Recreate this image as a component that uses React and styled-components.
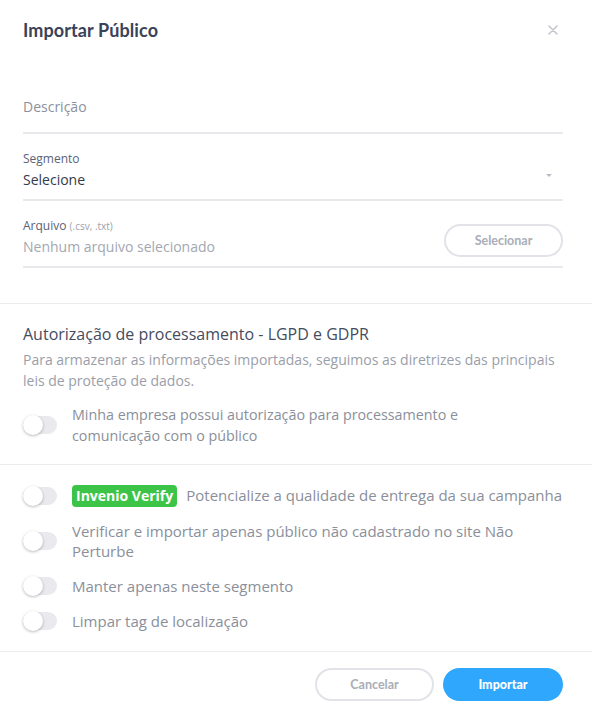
import React, { useState } from 'react'
import styled, { createGlobalStyle } from 'styled-components'

const GlobalStyle = createGlobalStyle`
  * { box-sizing: border-box; }
  body {
    margin: 0;
    background: #ffffff;
    font-family: "Open Sans", "Liberation Sans", sans-serif;
  }
`

const Modal = styled.div`
  width: 592px;
  height: 712px;
  background: #fff;
  display: flex;
  flex-direction: column;
`

const Header = styled.div`
  height: 60px;
  padding: 0 29px 0 23px;
  display: flex;
  align-items: center;
  justify-content: space-between;
`

const Title = styled.h2`
  margin: 0;
  font-family: Lato, "Open Sans", sans-serif;
  font-weight: 700;
  font-size: 18px;
  letter-spacing: 0.1px;
  color: #3a4258;
`

const Close = styled.button`
  border: none;
  background: none;
  padding: 0;
  width: 20px;
  height: 20px;
  display: flex;
  align-items: center;
  justify-content: center;
  cursor: pointer;
`

const Form = styled.div`
  padding: 37px 29px 35px 23px;
  border-bottom: 1px solid #ebecef;
  display: flex;
  flex-direction: column;
  gap: 16px;
`

const Field = styled.div`
  display: flex;
  align-items: flex-end;
  justify-content: space-between;
  border-bottom: 2px solid #e8e9ed;
  padding-bottom: ${p => p.$pb || 9}px;
`

const FieldBody = styled.div`
  display: flex;
  flex-direction: column;
  gap: ${p => p.$gap || 0}px;
`

const Label = styled.div`
  font-size: 12px;
  line-height: 18px;
  color: #5b6272;
  span {
    font-size: 10px;
    color: #9da1ab;
  }
`

const Value = styled.div`
  font-size: 14px;
  line-height: 20px;
  color: ${p => (p.$muted ? '#a3a7b1' : p.$placeholder ? '#8c909b' : '#333a4a')};
`

const Caret = styled.div`
  width: 0;
  height: 0;
  border-left: 3px solid transparent;
  border-right: 3px solid transparent;
  border-top: 3px solid #b9bcc4;
  margin: 0 11px 13px 0;
`

const GhostButton = styled.button`
  width: 119px;
  height: 33px;
  border: 2px solid #e2e3e8;
  border-radius: 17px;
  background: #fff;
  color: #a9adb7;
  font-family: Lato, "Open Sans", sans-serif;
  font-weight: 700;
  font-size: 12.5px;
  cursor: pointer;
`

const PrimaryButton = styled.button`
  width: 120px;
  height: 33px;
  border: none;
  border-radius: 17px;
  background: #2ea7fd;
  color: #fff;
  font-family: Lato, "Open Sans", sans-serif;
  font-weight: 900;
  font-size: 12.5px;
  cursor: pointer;
`

const Section = styled.div`
  padding: ${p => p.$pad};
  border-bottom: 1px solid #ebecef;
  display: flex;
  flex-direction: column;
  gap: ${p => p.$gap || 0}px;
`

const Heading = styled.h3`
  margin: 0;
  font-size: 16px;
  font-weight: 400;
  line-height: 22px;
  color: #454c5e;
`

const Para = styled.p`
  margin: 4px 0 0;
  font-size: 14px;
  line-height: 21px;
  color: #9a9ea9;
`

const ToggleRow = styled.label`
  display: flex;
  align-items: center;
  gap: 15px;
  cursor: pointer;
`

const Track = styled.span`
  flex: none;
  position: relative;
  width: 34px;
  height: 18px;
  border-radius: 9px;
  background: ${p => (p.$on ? '#2ea7fd' : '#e9e9ee')};
`

const Thumb = styled.span`
  position: absolute;
  top: -1px;
  left: ${p => (p.$on ? '14px' : '0')};
  width: 20px;
  height: 20px;
  border-radius: 50%;
  background: #fff;
  box-shadow: 0 1px 3px rgba(0, 0, 0, 0.28);
`

const ToggleText = styled.span`
  font-size: ${p => p.$size || 15}px;
  line-height: ${p => p.$lh || 20}px;
  color: #8a8f9b;
`

const Badge = styled.span`
  display: inline-block;
  background: #3cc448;
  color: #fff;
  font-weight: 700;
  font-size: 14px;
  line-height: 20px;
  padding: 1px 4px;
  margin: -1px 9px -1px 0;
  border-radius: 4px;
`

const ToggleWrap = styled.div`
  margin-top: 13px;
  width: 440px;
`

const Footer = styled.div`
  flex: 1;
  display: flex;
  justify-content: flex-end;
  align-items: center;
  gap: 9px;
  padding: 4px 29px 0 0;
`

function Toggle({ children, size, lh, initial = false }) {
  const [on, setOn] = useState(initial)
  return (
    <ToggleRow onClick={() => setOn(!on)}>
      <Track $on={on}>
        <Thumb $on={on} />
      </Track>
      <ToggleText $size={size} $lh={lh}>{children}</ToggleText>
    </ToggleRow>
  )
}

export default function App() {
  return (
    <Modal>
      <GlobalStyle />
      <Header>
        <Title>Importar Público</Title>
        <Close aria-label="Fechar">
          <svg width="10" height="10" viewBox="0 0 10 10">
            <path d="M1 1 L9 9 M9 1 L1 9" stroke="#c3c6cd" strokeWidth="1.6" strokeLinecap="round" />
          </svg>
        </Close>
      </Header>

      <Form>
        <Field $pb={15}>
          <FieldBody>
            <Value $placeholder>Descrição</Value>
          </FieldBody>
        </Field>
        <Field>
          <FieldBody $gap={2}>
            <Label>Segmento</Label>
            <Value>Selecione</Value>
          </FieldBody>
          <Caret />
        </Field>
        <Field>
          <FieldBody $gap={2}>
            <Label>
              Arquivo <span>(.csv, .txt)</span>
            </Label>
            <Value $muted>Nenhum arquivo selecionado</Value>
          </FieldBody>
          <GhostButton>Selecionar</GhostButton>
        </Field>
      </Form>

      <Section $pad="19px 23px 18px">
        <Heading>Autorização de processamento - LGPD e GDPR</Heading>
        <Para>
          Para armazenar as informações importadas, seguimos as diretrizes das principais leis de proteção de dados.
        </Para>
        <ToggleWrap>
          <Toggle size={14.3} lh={21}>
            Minha empresa possui autorização para processamento e comunicação com o público
          </Toggle>
        </ToggleWrap>
      </Section>

      <Section $pad="20px 23px 20px" $gap={15}>
        <Toggle>
          <Badge>Invenio Verify</Badge>Potencialize a qualidade de entrega da sua campanha
        </Toggle>
        <Toggle>Verificar e importar apenas público não cadastrado no site Não Perturbe</Toggle>
        <Toggle>Manter apenas neste segmento</Toggle>
        <Toggle>Limpar tag de localização</Toggle>
      </Section>

      <Footer>
        <GhostButton>Cancelar</GhostButton>
        <PrimaryButton>Importar</PrimaryButton>
      </Footer>
    </Modal>
  )
}
